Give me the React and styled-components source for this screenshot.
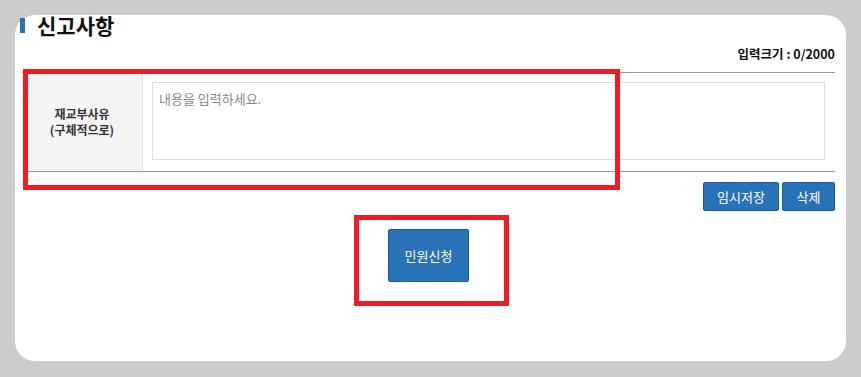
import React from 'react';
import styled, { createGlobalStyle } from 'styled-components';

const GlobalStyle = createGlobalStyle`
  html, body {
    margin: 0;
    padding: 0;
    background: #cccccc;
  }
  body {
    font-family: "Noto Sans CJK KR", "Noto Sans", sans-serif;
    color: #111;
  }
`;

const Wrapper = styled.div`
  width: 100vw;
  height: 377px;
  padding: 15px 15px 0 15px;
  box-sizing: border-box;
  overflow: hidden;
`;

const Panel = styled.section`
  width: 831px;
  height: 346px;
  box-sizing: border-box;
  padding: 0 11px 0 7px;
  background-color: #fff;
  border-radius: 20px;
`;

const Title = styled.h2`
  display: flex;
  align-items: center;
  gap: 12px;
  margin: 0 0 0 -2px;
  height: 20px;
  font-size: 21px;
  line-height: 20px;
  font-weight: 700;
  color: #111;
  &::before {
    content: '';
    display: block;
    width: 5px;
    height: 15px;
    background-color: #2a72b8;
  }
`;

const Counter = styled.p`
  margin: 11px 0 10px;
  text-align: right;
  font-size: 12.5px;
  line-height: 16px;
  font-weight: 700;
  color: #111;
`;

const Table = styled.div`
  position: relative;
  display: flex;
  border-top: 1px solid #999;
  border-bottom: 1px solid #999;
  height: 100px;
  box-sizing: border-box;
`;

const Label = styled.label`
  width: 120px;
  flex-shrink: 0;
  display: flex;
  align-items: center;
  justify-content: center;
  text-align: center;
  background-color: #f4f4f4;
  border-right: 1px solid #e2e2e2;
  font-size: 12px;
  line-height: 16px;
  font-weight: 700;
  color: #333;
`;

const Cell = styled.div`
  flex: 1;
  padding: 9px 10px 11px 9px;
`;

const Textarea = styled.textarea`
  display: block;
  width: 100%;
  height: 78px;
  box-sizing: border-box;
  padding: 7px 6px;
  border: 1px solid #dcdcdc;
  resize: none;
  outline: none;
  font-family: "Noto Sans CJK KR", "Noto Sans", sans-serif;
  font-size: 13px;
  line-height: 17px;
  color: #333;
  &::placeholder {
    color: #888;
  }
`;

const Mark = styled.span`
  position: absolute;
  border: 5px solid #ee1c25;
  pointer-events: none;
  box-sizing: border-box;
`;

const TableMark = styled(Mark)`
  left: 1px;
  top: -4px;
  width: 597px;
  height: 121px;
`;

const BtnBox = styled.div`
  display: flex;
  justify-content: flex-end;
  gap: 3px;
  margin-top: 10px;
`;

const Btn = styled.button`
  height: 29px;
  width: ${({ $w }) => $w}px;
  padding: 0;
  box-sizing: border-box;
  background-color: #2a72b8;
  border: 1px solid #1b5c9e;
  border-radius: 2px;
  color: #fff;
  font-family: "Noto Sans CJK KR", "Noto Sans", sans-serif;
  font-size: 13px;
  cursor: pointer;
`;

const SubmitBox = styled.div`
  display: flex;
  justify-content: center;
  margin-top: 18px;
`;

const SubmitWrap = styled.div`
  position: relative;
`;

const SubmitBtn = styled(Btn)`
  width: 81px;
  height: 53px;
`;

const SubmitMark = styled(Mark)`
  left: -34px;
  top: -14px;
  width: 155px;
  height: 91px;
`;

export default function App() {
  return (
    <>
      <GlobalStyle />
      <Wrapper>
        <Panel>
          <Title>신고사항</Title>
          <Counter>입력크기 : 0/2000</Counter>
          <Table>
            <Label htmlFor="reason">
              재교부사유
              <br />
              (구체적으로)
            </Label>
            <Cell>
              <Textarea id="reason" placeholder="내용을 입력하세요." />
            </Cell>
            <TableMark />
          </Table>
          <BtnBox>
            <Btn $w={76}>임시저장</Btn>
            <Btn $w={53}>삭제</Btn>
          </BtnBox>
          <SubmitBox>
            <SubmitWrap>
              <SubmitBtn>민원신청</SubmitBtn>
              <SubmitMark />
            </SubmitWrap>
          </SubmitBox>
        </Panel>
      </Wrapper>
    </>
  );
}
